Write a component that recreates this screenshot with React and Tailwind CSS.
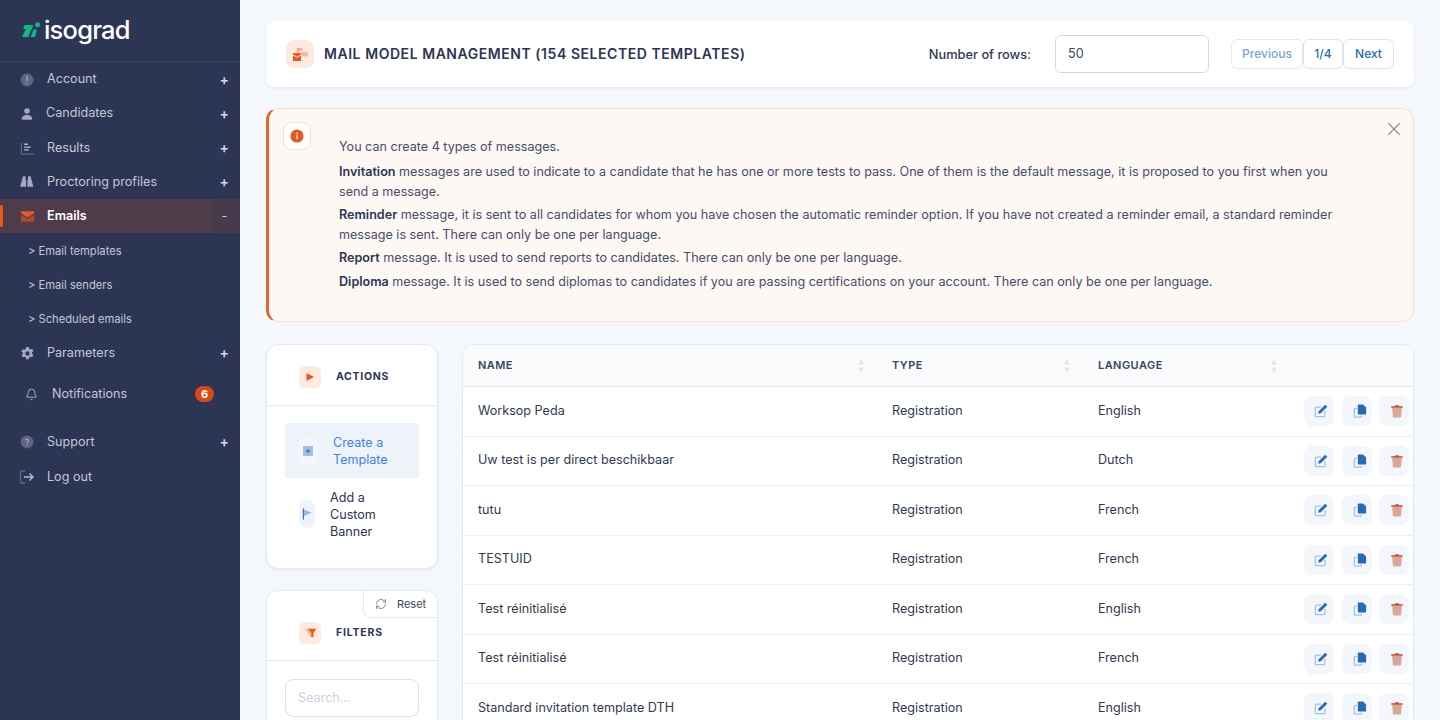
import React from "react";
import { X, RefreshCw, Bell } from "lucide-react";

const InfoIcon = ({ className }) => (
  <svg viewBox="0 0 16 16" className={className}>
    <circle cx="8" cy="8" r="6.500" fill="#5d6580" />
    <rect x="7.400" y="4" width="1.200" height="5" fill="#a9aec0" />
    <circle cx="8" cy="11" r="0.800" fill="#a9aec0" />
  </svg>
);
const UserIcon = ({ className }) => (
  <svg viewBox="0 0 16 16" className={className}>
    <circle cx="8" cy="4.500" r="3.200" fill="#a4a9bc" />
    <path d="M2 14.500c0-4 2.500-5.500 6-5.500s6 1.500 6 5.500z" fill="#a4a9bc" />
  </svg>
);
const ChartIcon = ({ className }) => (
  <svg viewBox="0 0 16 16" className={className}>
    <path d="M1.500 2v10.500a1.500 1.500 0 0 0 1.500 1.500h12" fill="none" stroke="#5d6580" strokeWidth="1.400" />
    <path d="M4.500 3.500h4M4.500 6.500h7M4.500 9.500h5" stroke="#b6bbcb" strokeWidth="1.500" />
  </svg>
);
const BinocularsIcon = ({ className }) => (
  <svg viewBox="0 0 16 16" className={className}>
    <path d="M3.500 1.500h3v4h.7v8.500H1c-.5 0-.7-.3-.7-.8zM12.500 1.500h-3v4h-.7v8.500H15c.5 0 .7-.3.7-.8z" fill="#a4a9bc" />
  </svg>
);
const MailIcon = ({ className }) => (
  <svg viewBox="0 0 16 16" className={className}>
    <path d="M1 2.500h14v2L8 9 1 4.500z" fill="#e35a26" />
    <path d="M1 6l7 4.500L15 6v7.500H1z" fill="#a84d30" />
  </svg>
);
const GearIcon = ({ className }) => (
  <svg viewBox="0 0 16 16" className={className}>
    <path
      fillRule="evenodd"
      d="M6.600 1h2.800l.4 1.900 1.200.7 1.900-.6 1.400 2.400-1.500 1.300v1.600l1.500 1.300-1.400 2.400-1.900-.6-1.200.7-.4 1.900H6.600l-.4-1.900-1.200-.7-1.900.6-1.400-2.400 1.500-1.300V7.200L1.300 5.900l1.400-2.400 1.900.6 1.200-.7zM8 5.700a2.300 2.300 0 1 0 0 4.600 2.300 2.300 0 0 0 0-4.600z"
      fill="#a4a9bc"
    />
  </svg>
);
const HelpIcon = ({ className }) => (
  <svg viewBox="0 0 16 16" className={className}>
    <circle cx="8" cy="8" r="6.500" fill="#5d6580" />
    <path d="M6.500 6.500a1.500 1.500 0 1 1 2.300 1.300c-.5.300-.8.600-.8 1.100" fill="none" stroke="#a9aec0" strokeWidth="1.100" />
    <circle cx="8" cy="11" r="0.700" fill="#a9aec0" />
  </svg>
);
const LogoutIcon = ({ className }) => (
  <svg viewBox="0 0 16 16" className={className}>
    <path d="M6 2H2.500A1 1 0 0 0 1.500 3v10a1 1 0 0 0 1 1H6" fill="none" stroke="#5d6580" strokeWidth="1.400" />
    <path d="M5 8h9M10.500 4.500 14 8l-3.500 3.500" fill="none" stroke="#b6bbcb" strokeWidth="1.400" />
  </svg>
);
const LogoMark = () => (
  <svg viewBox="0 0 18 16" className="h-[16px] w-[18px] shrink-0">
    <path d="M2.500 3H10.500L6.500 15H0L3.800 7H1.200z" fill="#13b884" />
    <path d="M11.500 2.500 9.500 8.500 8.500 5z" fill="#13b884" />
    <path d="M8.500 15 11.500 7.500H15L13 15z" fill="#13b884" />
    <circle cx="15.500" cy="2.700" r="2.500" fill="#13b884" />
  </svg>
);

const EditIcon = () => (
  <svg viewBox="0 0 16 16" className="h-[14px] w-[14px]">
    <path d="M8 3.500H2.500a1 1 0 0 0-1 1v9a1 1 0 0 0 1 1h9a1 1 0 0 0 1-1V8" fill="none" stroke="#a7c1e0" strokeWidth="1.500" />
    <path d="M12.800.8 15.200 3.200 7.800 10.600 4.800 11.200 5.400 8.200z" fill="#2a6ab2" />
  </svg>
);
const CopyIcon = () => (
  <svg viewBox="0 0 16 16" className="h-[14px] w-[14px]">
    <path d="M4.500 5H2.500a1 1 0 0 0-1 1v8a1 1 0 0 0 1 1h6a1 1 0 0 0 1-1v-1" fill="none" stroke="#a7c1e0" strokeWidth="1.500" />
    <path d="M6.500.5h5l3.500 3.500V11a1 1 0 0 1-1 1H6.500a1 1 0 0 1-1-1V1.500a1 1 0 0 1 1-1z" fill="#2a6ab2" />
  </svg>
);
const TrashIcon = () => (
  <svg viewBox="0 0 16 16" className="h-[14px] w-[14px]">
    <path d="M2.500 4.500h11l-.8 10a1 1 0 0 1-1 .9H4.300a1 1 0 0 1-1-.9z" fill="#d9a79a" />
    <path d="M1.500 2.500h4.500V1.500h4v1h4.500v1.700h-13z" fill="#b84f30" />
  </svg>
);

const SortArrows = () => (
  <svg viewBox="0 0 8 16" className="h-[16px] w-[8px]">
    <path d="M4 1 7 6.500H1zM4 15 1 9.500h6z" fill="#e2e6ec" />
  </svg>
);

const navTop = [
  { label: "Account", Icon: InfoIcon, size: "h-[16px] w-[16px]", textOffset: "ml-[12px]" },
  { label: "Candidates", Icon: UserIcon, size: "h-[14px] w-[14px]", textOffset: "ml-[11px]" },
  { label: "Results", Icon: ChartIcon, size: "h-[15px] w-[15px]", textOffset: "ml-[12px]" },
  { label: "Proctoring profiles", Icon: BinocularsIcon, size: "h-[13.500px] w-[13.500px]", textOffset: "ml-[12px]" },
];

const rows = [
  ["Worksop Peda", "Registration", "English"],
  ["Uw test is per direct beschikbaar", "Registration", "Dutch"],
  ["tutu", "Registration", "French"],
  ["TESTUID", "Registration", "French"],
  ["Test réinitialisé", "Registration", "English"],
  ["Test réinitialisé", "Registration", "French"],
  ["Standard invitation template DTH", "Registration", "English"],
];

function NavItem({ label, Icon, size, textOffset }) {
  return (
    <div className="flex h-[34.200px] items-center pl-[19px] pr-[11px] text-[12.600px] text-[#c3c7d6]">
      <span className="flex w-[16px] justify-center">
        <Icon className={size} />
      </span>
      <span className={textOffset}>{label}</span>
      <span className="ml-auto text-[14px] font-semibold leading-none text-[#d5d8e2]">+</span>
    </div>
  );
}

function Sidebar() {
  return (
    <aside className="flex h-full w-[240px] shrink-0 flex-col bg-[#2c3553]">
      <div className="flex h-[62px] items-center gap-[4px] border-b border-[#3b4463] pb-[1px] pl-[22px]">
        <LogoMark />
        <span className="text-[25.500px] font-medium leading-none tracking-[-0.800px] text-white">isograd</span>
      </div>
      <nav className="flex flex-col pt-[0.550px]">
        {navTop.map((item) => (
          <NavItem key={item.label} {...item} />
        ))}
        <div className="relative flex h-[34.200px] items-center bg-[#503b48] pl-[19px] text-[12.600px] font-semibold text-white">
          <span className="absolute left-0 top-[6px] h-[22px] w-[3px] rounded-r-[2px] bg-[#e8591f]" />
          <span className="flex w-[16px] justify-center">
            <MailIcon className="h-[15px] w-[15px]" />
          </span>
          <span className="ml-[12px]">Emails</span>
          <span className="ml-auto flex h-full w-[29px] items-center justify-center bg-[#473a4c] pr-[2px] text-[13px] font-normal text-[#c3c7d6]">-</span>
        </div>
        <div className="mb-[-0.300px] flex flex-col pt-[1px] text-[11.200px] text-[#c3c7d6]">
          <div className="flex h-[34px] items-center pl-[28px]">&gt; Email templates</div>
          <div className="flex h-[34px] items-center pl-[28px]">&gt; Email senders</div>
          <div className="flex h-[34px] items-center pl-[28px]">&gt; Scheduled emails</div>
        </div>
        <NavItem label="Parameters" Icon={GearIcon} size="h-[15px] w-[15px]" textOffset="ml-[12px]" />
        <div className="mt-[7px] flex h-[34px] items-center pl-[25px] pr-[26px] text-[12.600px] text-[#c3c7d6]">
          <Bell className="h-[13px] w-[13px] text-[#c3c7d6]" strokeWidth={1.500} />
          <span className="ml-[14px]">Notifications</span>
          <span className="ml-auto flex h-[16px] w-[19px] items-center justify-center rounded-full bg-[#d9481a] text-[11px] font-bold text-white">6</span>
        </div>
        <div className="mt-[14px]">
          <NavItem label="Support" Icon={HelpIcon} size="h-[16px] w-[16px]" textOffset="ml-[12px]" />
        </div>
        <div className="mt-[0.500px] flex h-[34.200px] items-center pl-[19px] text-[12.600px] text-[#c3c7d6]">
          <LogoutIcon className="h-[16px] w-[16px]" />
          <span className="ml-[12px]">Log out</span>
        </div>
      </nav>
    </aside>
  );
}

function HeaderCard() {
  return (
    <div className="flex h-[66px] items-center rounded-[8px] bg-white pl-[20px] pr-[20px] shadow-[0_1px_3px_rgba(30,50,90,0.08)]">
      <div className="flex h-[28px] w-[28px] items-center justify-center rounded-[8px] bg-[#fdeae1]">
        <svg viewBox="0 0 16 16" className="h-[15px] w-[15px]">
          <path d="M4 1h6v3H6v2H4z" fill="#f3a98c" />
          <rect x="9" y="5" width="7" height="5" rx="0.500" fill="#f7b9a0" />
          <path d="M0 6.500h8.500V8L4.250 10.500 0 8z" fill="#e8591f" />
          <path d="M0 9l4.250 2.500L8.500 9v6H0z" fill="#e8591f" />
        </svg>
      </div>
      <h1 className="mb-[1px] ml-[10px] text-[14px] font-semibold tracking-[0.550px] text-[#2c3553]">MAIL MODEL MANAGEMENT (154 SELECTED TEMPLATES)</h1>
      <span className="ml-auto pt-[1px] text-[12.800px] font-medium text-[#2f3a4f]">Number of rows:</span>
      <div className="ml-[24px] flex h-[38px] w-[154px] items-center rounded-[6px] border border-[#cfd8e6] bg-white pl-[12px] text-[12.600px] text-[#3a4560]">50</div>
      <div className="ml-[22px] flex h-[30px] text-[12px] font-medium">
        <span className="flex w-[72px] items-center justify-center rounded-[6px] border border-[#e4e9f1] text-[#7ba3d3]">Previous</span>
        <span className="flex w-[40px] items-center justify-center rounded-[6px] border border-[#dfe5ee] text-[#2a6ab2]">1/4</span>
        <span className="flex w-[51px] items-center justify-center rounded-[6px] border border-[#dfe5ee] text-[#2a6ab2]">Next</span>
      </div>
    </div>
  );
}

function AlertCard() {
  return (
    <div className="relative mt-[21px] flex h-[214px] rounded-[12px] border border-[#f6dfcc] border-l-[3px] border-l-[#e8622c] bg-[#fef8f4] pl-[14px]">
      <div className="mt-[13px] flex h-[28px] w-[28px] shrink-0 items-center justify-center rounded-[8px] border border-[#f6dfcc] bg-white">
        <svg viewBox="0 0 16 16" className="h-[14px] w-[14px]">
          <circle cx="8" cy="8" r="7.500" fill="#e35a26" />
          <rect x="7.200" y="7" width="1.600" height="4.500" fill="#fff" />
          <rect x="7.200" y="4.300" width="1.600" height="1.600" fill="#fff" />
        </svg>
      </div>
      <div className="ml-[28px] w-[1000px] pt-[28px] text-[12.600px] leading-[20px] text-[#454e6b]">
        <p className="mb-[5px]">You can create 4 types of messages.</p>
        <p className="mb-[2.800px]"><b className="font-semibold text-[#2c3553]">Invitation</b> messages are used to indicate to a candidate that he has one or more tests to pass. One of them is the default message, it is proposed to you first when you send a message.</p>
        <p className="mb-[3.200px]"><b className="font-semibold text-[#2c3553]">Reminder</b> message, it is sent to all candidates for whom you have chosen the automatic reminder option. If you have not created a reminder email, a standard reminder message is sent. There can only be one per language.</p>
        <p className="mb-[4px]"><b className="font-semibold text-[#2c3553]">Report</b> message. It is used to send reports to candidates. There can only be one per language.</p>
        <p><b className="font-semibold text-[#2c3553]">Diploma</b> message. It is used to send diplomas to candidates if you are passing certifications on your account. There can only be one per language.</p>
      </div>
      <X className="absolute right-[8.500px] top-[8.500px] h-[22px] w-[22px] text-[#8b8b8b]" strokeWidth={1.200} />
    </div>
  );
}

function ActionsCard() {
  return (
    <div className="rounded-[12px] border border-[#e4e9f1] bg-white shadow-[0_1px_3px_rgba(30,50,90,0.06)]">
      <div className="flex h-[61px] items-center border-b border-[#e4e9f1] pl-[32px] pt-[4px]">
        <div className="flex h-[22px] w-[22px] items-center justify-center rounded-[6px] bg-[#fdeae1]">
          <svg viewBox="0 0 10 10" className="h-[10px] w-[10px]"><path d="M1.500 1 9 5 1.500 9z" fill="#e8591f" /></svg>
        </div>
        <span className="ml-[15px] text-[10.500px] font-bold tracking-[0.700px] text-[#2c3553]">ACTIONS</span>
      </div>
      <div className="px-[18px] pb-[18px] pt-[17px] text-[12.600px] leading-[17px]">
        <div className="flex h-[55px] items-center rounded-[2px] bg-[#eef3fa] pl-[13px] text-[#3f82e0]">
          <div className="flex h-[26px] w-[20px] shrink-0 items-center justify-center rounded-[6px] bg-[#f3f6fb]">
            <svg viewBox="0 0 10 10" className="h-[10px] w-[10px]">
              <rect width="10" height="10" rx="1" fill="#a3bfe4" />
              <path d="M5 2.800v4.400M2.800 5h4.400" stroke="#2a6ab2" strokeWidth="1" />
            </svg>
          </div>
          <span className="ml-[15px]">Create a<br />Template</span>
        </div>
        <div className="flex h-[72px] items-center pl-[14px] text-[#2c3553]">
          <div className="flex h-[28px] w-[16px] shrink-0 items-center justify-center rounded-[8px] bg-[#eef3fa]">
            <svg viewBox="0 0 12 14" className="h-[12px] w-[11px]">
              <path d="M1.500 1.500 11 5.500 1.500 9.500z" fill="#9cbce3" />
              <rect x="0.500" y="0.500" width="1.300" height="13" fill="#2a6ab2" />
            </svg>
          </div>
          <span className="ml-[15px]">Add a<br />Custom<br />Banner</span>
        </div>
      </div>
    </div>
  );
}

function FiltersCard() {
  return (
    <div className="relative mt-[21px] rounded-[12px] border border-[#e4e9f1] bg-white pb-[20px]">
      <div className="absolute right-0 top-0 flex h-[27px] w-[74px] items-center rounded-bl-[8px] rounded-tr-[12px] border-b border-l border-[#e4e9f1] pl-[11px] text-[11px] text-[#3a4560]">
        <RefreshCw className="h-[12px] w-[12px] text-[#7c7f88]" strokeWidth={1.800} />
        <span className="ml-[10px]">Reset</span>
      </div>
      <div className="flex h-[70px] items-center border-b border-[#e4e9f1] pl-[32px] pt-[14px]">
        <div className="flex h-[22px] w-[22px] items-center justify-center rounded-[6px] bg-[#fdeae1]">
          <svg viewBox="0 0 14 12" className="h-[10px] w-[13px]">
            <path d="M0 1h7l2 5v5H7L4 6z" fill="#f7b9a0" />
            <path d="M4 1h10L10.500 6v5H8V6z" fill="#e8591f" />
          </svg>
        </div>
        <span className="ml-[15px] text-[10.500px] font-bold tracking-[0.800px] text-[#2c3553]">FILTERS</span>
      </div>
      <div className="px-[18px] pt-[18px]">
        <div className="flex h-[38px] items-center rounded-[8px] border border-[#dbe2ec] pl-[12px] text-[12.600px] text-[#cbd3e0]">Search...</div>
      </div>
    </div>
  );
}

function TemplatesTable() {
  return (
    <div className="ml-[24px] flex-1 self-start overflow-hidden rounded-[12px] border border-[#e4e9f1] bg-white">
      <div className="flex h-[42px] items-center border-b border-[#e4e9f1] bg-[#f9fbfd] text-[11px] font-semibold tracking-[0.450px] text-[#3a4560]">
        <div className="flex w-[402px] items-center justify-between pl-[15px]"><span>NAME</span><SortArrows /></div>
        <div className="flex w-[206px] items-center justify-between pl-[27px]"><span>TYPE</span><SortArrows /></div>
        <div className="flex w-[207px] items-center justify-between pl-[27px]"><span>LANGUAGE</span><SortArrows /></div>
      </div>
      {rows.map((row, i) => (
        <div key={i} className="flex h-[49.500px] items-center border-b border-[#eceff4] text-[12.600px] text-[#2f3a4f]">
          <div className="w-[402px] pl-[15px]">{row[0]}</div>
          <div className="w-[206px] pl-[27px]">{row[1]}</div>
          <div className="w-[233px] pl-[27px]">{row[2]}</div>
          <div className="flex gap-[7.500px]">
            <span className="flex h-[30px] w-[30px] items-center justify-center rounded-[8px] bg-[#f3f7fc] pl-[3px]"><EditIcon /></span>
            <span className="flex h-[30px] w-[30px] items-center justify-center rounded-[8px] bg-[#f3f7fc] pl-[6px]"><CopyIcon /></span>
            <span className="flex h-[30px] w-[30px] items-center justify-center rounded-[8px] bg-[#f3f7fc] pl-[6px]"><TrashIcon /></span>
          </div>
        </div>
      ))}
    </div>
  );
}

export default function App() {
  return (
    <div className="flex h-screen w-full overflow-hidden bg-[#f4f7fb] font-['Inter',sans-serif]">
      <Sidebar />
      <main className="min-w-0 flex-1 overflow-hidden pl-[26px] pr-[26px] pt-[21px]">
        <HeaderCard />
        <AlertCard />
        <div className="mt-[22px] flex">
          <div className="w-[172px] shrink-0">
            <ActionsCard />
            <FiltersCard />
          </div>
          <TemplatesTable />
        </div>
      </main>
    </div>
  );
}
